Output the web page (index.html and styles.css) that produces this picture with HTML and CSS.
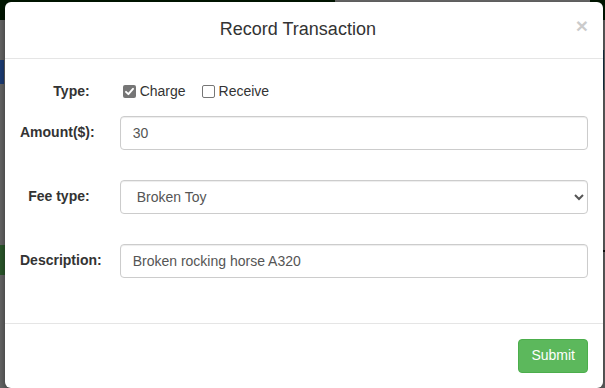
FILE: index.html
```html
<!DOCTYPE html>
<html>
<head>
<meta charset="utf-8">
<link rel="stylesheet" href="styles.css">
</head>
<body>
<div class="page">
  <div class="navbar">
    <div class="nav-dark"></div>
    <div class="nav-gray"></div>
    <div class="nav-dark2"></div>
  </div>
  <div class="page-body">
    <div class="left-edge">
      <div class="blue-frag"></div>
      <div class="green-frag"></div>
    </div>
    <div class="right-edge">
      <div class="blue-frag"></div>
      <div class="green-frag"></div>
    </div>
  </div>
</div>

<div class="modal">
  <div class="modal-header">
    <h4 class="modal-title">Record Transaction</h4>
    <span class="close">&times;</span>
  </div>
  <div class="modal-body">
    <div class="form-group type-row">
      <label class="control-label">Type:</label>
      <div class="col checks">
        <span class="check">
          <span class="box checked"><svg viewBox="0 0 13 13" width="13" height="13"><path d="M3 6.8 L5.4 9.2 L10 3.8" fill="none" stroke="#fff" stroke-width="1.9" stroke-linecap="round" stroke-linejoin="round"/></svg></span>
          Charge
        </span>
        <span class="check">
          <span class="box"></span>
          Receive
        </span>
      </div>
    </div>
    <div class="form-group">
      <label class="control-label">Amount($):</label>
      <div class="col"><input class="form-control" type="text" value="30"></div>
    </div>
    <div class="form-group">
      <label class="control-label">Fee type:</label>
      <div class="col">
        <select class="form-control">
          <option>Broken Toy</option>
        </select>
      </div>
    </div>
    <div class="form-group last">
      <label class="control-label">Description:</label>
      <div class="col"><input class="form-control" type="text" value="Broken rocking horse A320"></div>
    </div>
  </div>
  <div class="modal-footer">
    <button class="btn-success">Submit</button>
  </div>
</div>
</body>
</html>
```
FILE: styles.css
```css
* { box-sizing: border-box; }
html, body {
  margin: 0;
  padding: 0;
}
body {
  width: 605px;
  height: 388px;
  overflow: hidden;
  background: #676767;
  font-family: "Liberation Sans", Arial, Helvetica, sans-serif;
  font-size: 14px;
  line-height: 1.42857;
  color: #333;
  position: relative;
}
.page {
  height: 388px;
  display: flex;
  flex-direction: column;
}
.navbar {
  height: 20px;
  display: flex;
}
.nav-dark { width: 335px; background: #001600; }
.nav-gray { flex: 1; background: #6a6a6a; }
.nav-dark2 { width: 15px; background: #001600; }
.page-body {
  flex: 1;
  display: flex;
  justify-content: space-between;
}
.left-edge, .right-edge {
  width: 5px;
  position: relative;
}
.left-edge { background: #676767; }
.blue-frag {
  position: absolute;
  left: 0;
  top: 40px;
  width: 4px;
  height: 24px;
  background: #1e3e78;
}
.green-frag {
  position: absolute;
  left: 0;
  top: 225px;
  width: 5px;
  height: 30px;
  background: #2c5a2c;
}
.right-edge .blue-frag { top: 30px; height: 40px; background: #1a3348; }
.right-edge .green-frag { top: 230px; height: 2px; background: #111; }

.modal {
  position: absolute;
  left: 5px;
  top: 2px;
  width: 598px;
  background: #fff;
  border-radius: 6px;
  box-shadow: 0 3px 9px rgba(0,0,0,.5);
}
.modal-header {
  display: flex;
  align-items: flex-start;
  padding: 15px;
  border-bottom: 1px solid #e5e5e5;
}
.modal-title {
  flex: 1;
  margin: 0;
  text-align: center;
  font-size: 18px;
  font-weight: 500;
  line-height: 1.42857;
  color: #333;
}
.close {
  margin-top: -2px;
  font-size: 21px;
  font-weight: bold;
  line-height: 1;
  color: #000;
  opacity: .2;
}
.modal-body {
  padding: 15px;
}
.form-group {
  display: grid;
  grid-template-columns: 16.6667% 83.3333%;
  margin: 0 -15px 30px;
}
.form-group.type-row { margin-bottom: 14px; }
.form-group.last { margin-bottom: 30px; }
.control-label {
  padding: 7px 15px 0;
  text-align: right;
  font-weight: bold;
  white-space: nowrap;
}
.type-row .control-label { padding-top: 8px; }
.col {
  padding: 0 15px;
}
.checks {
  padding-top: 8px;
  display: flex;
  align-items: center;
  height: 28px;
}
.check {
  display: inline-flex;
  align-items: center;
  margin-left: 3px;
  margin-right: 13px;
}
.box {
  width: 13px;
  height: 13px;
  border: 1px solid #767676;
  border-radius: 2px;
  background: #fff;
  margin-right: 4px;
  display: inline-block;
}
.box.checked {
  border: none;
  background: #767676;
}
.box svg { display: block; }
.form-control {
  display: block;
  width: 100%;
  height: 34px;
  padding: 6px 12px;
  font-family: "Liberation Sans", Arial, Helvetica, sans-serif;
  font-size: 14px;
  line-height: 1.42857;
  color: #555;
  background: #fff;
  border: 1px solid #ccc;
  border-radius: 4px;
  box-shadow: inset 0 1px 1px rgba(0,0,0,.075);
  margin: 0;
}
.modal-footer {
  padding: 15px;
  border-top: 1px solid #e5e5e5;
  display: flex;
  justify-content: flex-end;
}
.btn-success {
  height: 34px;
  padding: 6px 12px;
  font-family: "Liberation Sans", Arial, Helvetica, sans-serif;
  font-size: 14px;
  line-height: 1.42857;
  color: #fff;
  background: #5cb85c;
  border: 1px solid #4cae4c;
  border-radius: 4px;
}
```
